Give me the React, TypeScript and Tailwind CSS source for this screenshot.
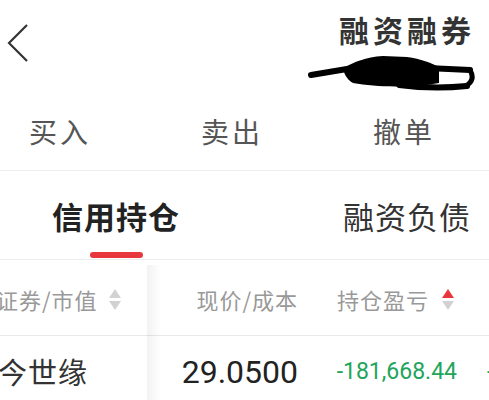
import React from 'react';

const cjk = { fontFamily: '"Noto Sans CJK SC", "Noto Sans", sans-serif' };
const num = { fontFamily: 'Roboto, "Noto Sans CJK SC", sans-serif' };

function SortIcon({ active }: { active?: boolean }) {
  return (
    <svg width="14" height="23" viewBox="0 0 14 23" className="shrink-0">
      <path d="M7 1 L13 10 L1 10 Z" fill={active ? '#e8383d' : '#d2d2d2'} />
      <path d="M1 13 L13 13 L7 22 Z" fill="#d2d2d2" />
    </svg>
  );
}

// redaction scribble over the account name
function Scribble() {
  return (
    <svg width="168" height="38" viewBox="0 0 168 38" className="block">
      <path
        d="M36 14 C 48 8, 58 3, 76 2 L 100 3 C 114 5, 124 9, 132 13 L 132 29 C 110 33, 72 34, 46 29 C 39 25, 37 19, 36 14 Z"
        fill="#000"
      />
      <g fill="none" stroke="#000" strokeLinecap="round" strokeLinejoin="round">
        <path d="M4 21 C 16 19, 28 17, 40 15" strokeWidth="6" />
        <path d="M120 14 L 163 16" strokeWidth="6" />
        <path d="M163 16 Q 169 26 159 32" strokeWidth="5" />
        <path d="M92 31 C 115 34, 140 34, 160 32" strokeWidth="6" />
      </g>
    </svg>
  );
}

export default function App() {
  return (
    <div className="w-[489px] h-[400px] overflow-hidden bg-white" style={cjk}>
      {/* Header */}
      <div className="flex h-[100px] items-start">
        <div className="pl-[6px] pt-[23px]">
          <svg width="24" height="40" viewBox="0 0 24 40">
            <path d="M21 2 L3 20 L21 38" fill="none" stroke="#333" strokeWidth="2.2" />
          </svg>
        </div>
        <div className="ml-auto flex flex-col items-end pt-[10px] pr-[14px]">
          <div className="text-[30px] leading-[38px] font-bold text-[#333] tracking-[4px]">融资融券</div>
          <div className="mt-[6px]">
            <Scribble />
          </div>
        </div>
      </div>

      {/* Trade tabs */}
      <div className="flex h-[71px] items-center justify-between pl-[29px] pr-[54px] border-b border-[#eeeeee] pb-[8px]">
        <span className="text-[28px] text-[#555] tracking-[3px]">买入</span>
        <span className="text-[28px] text-[#555] tracking-[3px]">卖出</span>
        <span className="text-[28px] text-[#555] tracking-[3px]">撤单</span>
      </div>

      {/* Position tabs */}
      <div className="flex h-[89px] justify-between pl-[52px] pr-[18px] border-b border-[#eeeeee]">
        <div className="flex flex-col items-center pt-[26px]">
          <span className="text-[31px] leading-[38px] font-bold text-[#222] tracking-[1px]">信用持仓</span>
          <div className="mt-[17px] h-[6px] w-[53px] rounded-full bg-[#e8383d]" />
        </div>
        <div className="pt-[26px]">
          <span className="text-[31px] leading-[38px] text-[#333] tracking-[1px]">融资负债</span>
        </div>
      </div>

      {/* Table */}
      <div className="mt-[5px] flex">
        <div className="relative z-10 w-[147px] shrink-0 bg-white">
          <div className="flex h-[71px] items-center border-b border-[#e8e8e8] pb-[2px]">
            <span className="-ml-[4px] text-[22px] text-[#999] tracking-[1px]">证券/市值</span>
            <span className="ml-[10px]"><SortIcon /></span>
          </div>
          <div className="flex h-[72px] items-center">
            <span className="-ml-[2px] text-[29px] text-[#333] tracking-[1px]">今世缘</span>
          </div>
          <div className="absolute left-full top-0 bottom-0 w-[14px] bg-gradient-to-r from-black/[0.05] to-transparent" />
        </div>
        <div className="flex-1">
          <div className="flex h-[71px] items-center border-b border-[#e8e8e8] pb-[2px]">
            <div className="w-[151px] text-right text-[22px] text-[#999] tracking-[1px]">现价/成本</div>
            <div className="flex w-[159px] items-center justify-end pr-[2px]">
              <span className="text-[22px] text-[#999] tracking-[1px]">持仓盈亏</span>
              <span className="ml-[12px]"><SortIcon active /></span>
            </div>
          </div>
          <div className="flex h-[72px] items-center">
            <div className="w-[151px] text-right text-[32px] text-[#222]" style={num}>29.0500</div>
            <div className="w-[159px] text-right text-[23px] text-[#21a55b]" style={num}>-181,668.44</div>
            <div className="pl-[30px] text-[23px] text-[#21a55b]" style={num}>-</div>
          </div>
        </div>
      </div>
    </div>
  );
}
